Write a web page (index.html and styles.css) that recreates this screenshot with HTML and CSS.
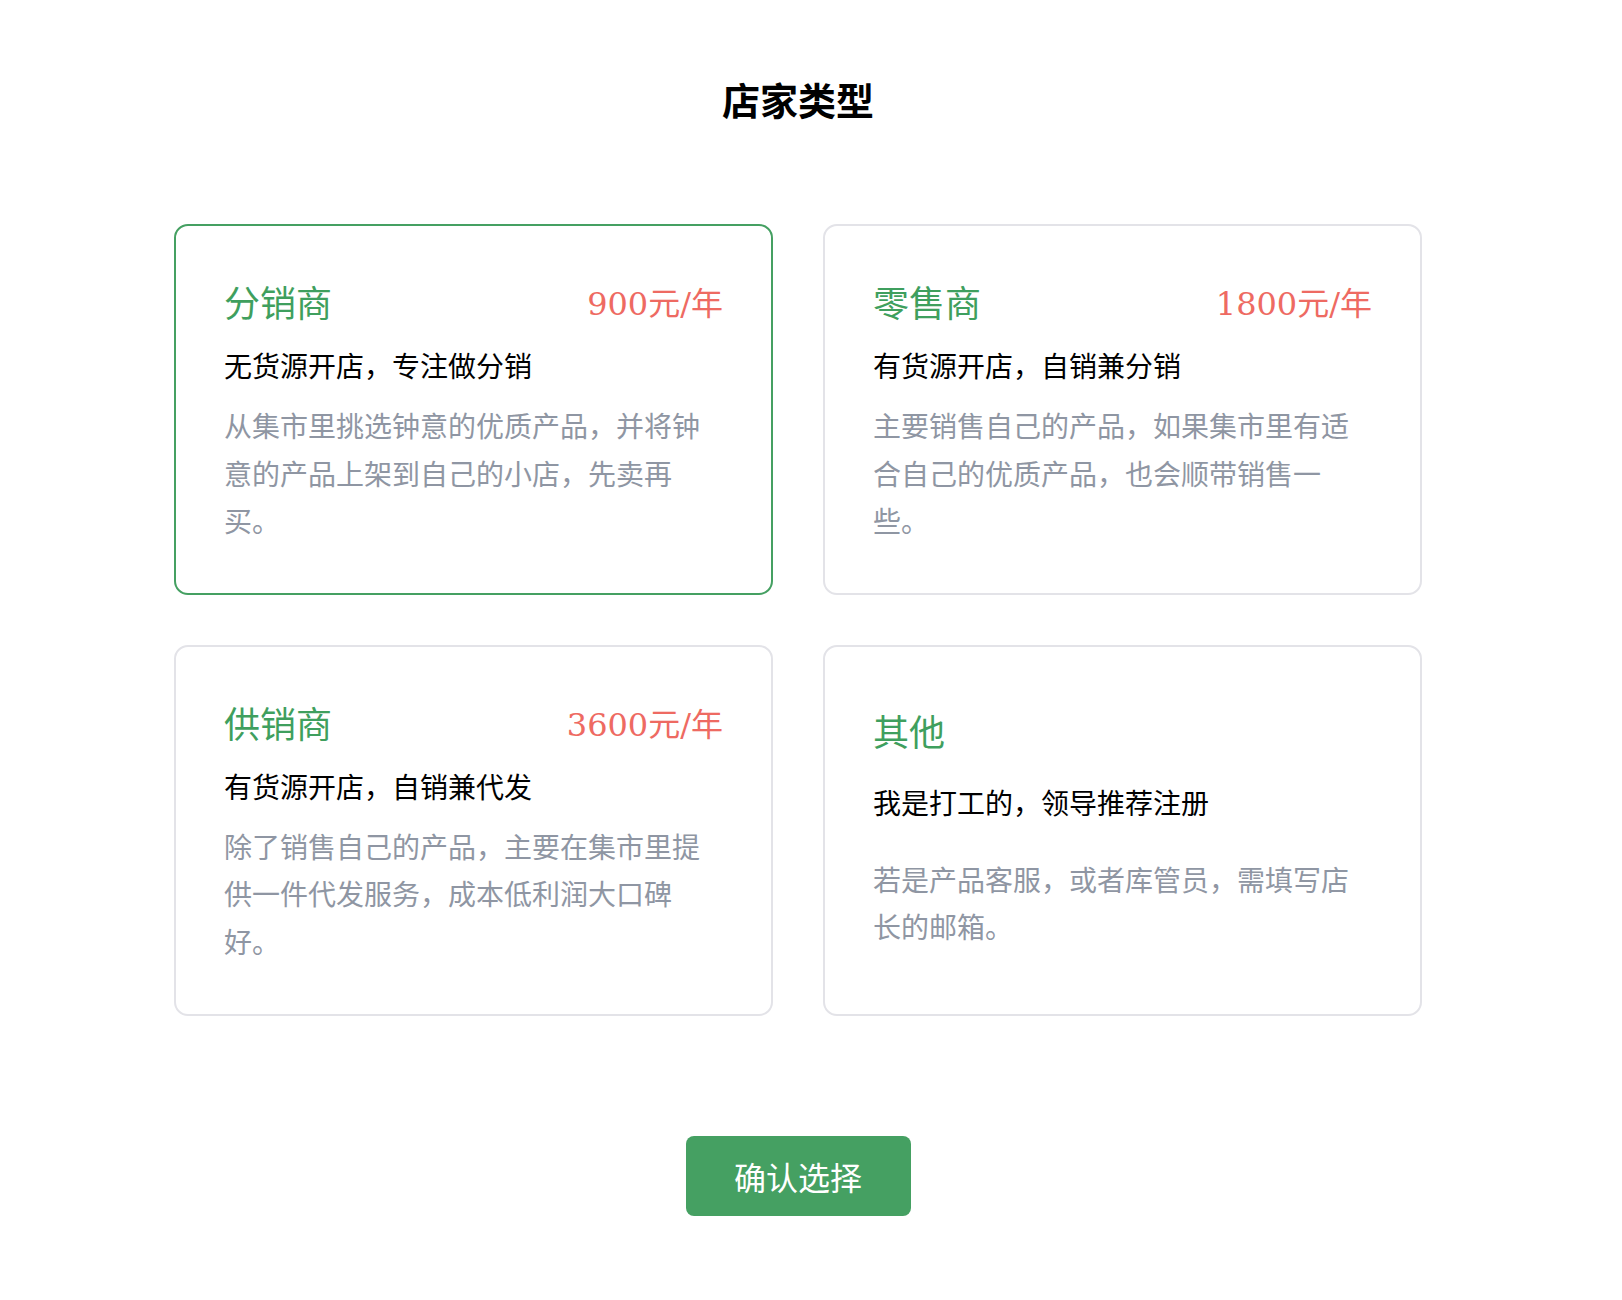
FILE: index.html
```html
<!DOCTYPE html>
<html lang="zh-CN">
<head>
    <meta charset="UTF-8">
    <meta name="viewport" content="width=device-width, initial-scale=1.0">
    <title>店家类型</title>
    <link rel="stylesheet" href="styles.css">
</head>
<body>
    <div class="page">
        <h1 class="page-title">店家类型</h1>

        <div class="type-grid">
            <div class="type-card active" onclick="selectType(this)">
                <div class="card-head">
                    <span class="card-name">分销商</span>
                    <span class="card-price">900元/年</span>
                </div>
                <div class="card-sub">无货源开店，专注做分销</div>
                <div class="card-desc">从集市里挑选钟意的优质产品，并将钟意的产品上架到自己的小店，先卖再买。</div>
            </div>
            <div class="type-card" onclick="selectType(this)">
                <div class="card-head">
                    <span class="card-name">零售商</span>
                    <span class="card-price">1800元/年</span>
                </div>
                <div class="card-sub">有货源开店，自销兼分销</div>
                <div class="card-desc">主要销售自己的产品，如果集市里有适合自己的优质产品，也会顺带销售一些。</div>
            </div>
            <div class="type-card" onclick="selectType(this)">
                <div class="card-head">
                    <span class="card-name">供销商</span>
                    <span class="card-price">3600元/年</span>
                </div>
                <div class="card-sub">有货源开店，自销兼代发</div>
                <div class="card-desc">除了销售自己的产品，主要在集市里提供一件代发服务，成本低利润大口碑好。</div>
            </div>
            <div class="type-card simple" onclick="selectType(this)">
                <div class="card-head">
                    <span class="card-name">其他</span>
                </div>
                <div class="card-sub">我是打工的，领导推荐注册</div>
                <div class="card-desc">若是产品客服，或者库管员，需填写店长的邮箱。</div>
            </div>
        </div>

        <div class="actions">
            <button class="confirm-btn">确认选择</button>
        </div>
    </div>

    <script>
        function selectType(card) {
            document.querySelectorAll('.type-card').forEach(item => {
                item.classList.remove('active');
            });
            card.classList.add('active');
        }
    </script>
</body>
</html>
```

FILE: styles.css
```css
* {
    margin: 0;
    padding: 0;
    box-sizing: border-box;
    font-family: "Noto Sans CJK SC", "Noto Sans", sans-serif;
}

body {
    background-color: #fff;
    color: #000;
}

.page {
    width: 1596px;
    padding-top: 70px;
}

.page-title {
    text-align: center;
    font-size: 38px;
    font-weight: 700;
    line-height: 57px;
}

.type-grid {
    width: 1248px;
    margin: 97px auto 0;
    display: grid;
    grid-template-columns: 1fr 1fr;
    gap: 50px;
}

.type-card {
    border: 2px solid #e3e3e8;
    border-radius: 14px;
    padding: 48px;
    cursor: pointer;
    transition: border-color 0.2s ease;
}

.type-card.active {
    border-color: #45a062;
}

.card-head {
    display: flex;
    justify-content: space-between;
    align-items: center;
    height: 54px;
}

.card-name {
    font-size: 36px;
    line-height: 54px;
    color: #3f9f5e;
}

.card-price {
    font-family: "DejaVu Serif", "Noto Sans CJK SC", serif;
    font-size: 32px;
    color: #ee6a62;
}

.card-sub {
    margin-top: 16px;
    font-size: 28px;
    line-height: 42px;
}

.card-desc {
    margin-top: 16px;
    font-size: 28px;
    line-height: 1.7;
    color: #8f96a3;
}

.type-card.simple {
    padding-top: 56px;
}

.type-card.simple .card-sub {
    margin-top: 24px;
}

.type-card.simple .card-desc {
    margin-top: 33px;
}

.actions {
    display: flex;
    justify-content: center;
    margin-top: 120px;
}

.confirm-btn {
    width: 225px;
    height: 80px;
    border: none;
    border-radius: 8px;
    background-color: #45a062;
    color: #fff;
    font-size: 32px;
    cursor: pointer;
}
```
